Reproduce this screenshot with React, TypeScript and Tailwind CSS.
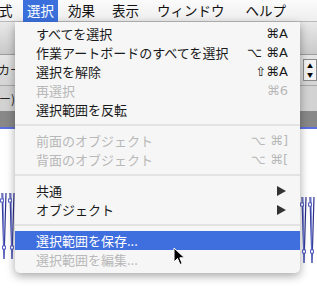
import React from 'react'

type Item =
  | { kind: 'sep' }
  | { kind: 'item'; label: string; shortcut?: string; disabled?: boolean; submenu?: boolean; active?: boolean }

const items: Item[] = [
  { kind: 'item', label: 'すべてを選択', shortcut: '⌘A' },
  { kind: 'item', label: '作業アートボードのすべてを選択', shortcut: '⌥ ⌘A' },
  { kind: 'item', label: '選択を解除', shortcut: '⇧⌘A' },
  { kind: 'item', label: '再選択', shortcut: '⌘6', disabled: true },
  { kind: 'item', label: '選択範囲を反転' },
  { kind: 'sep' },
  { kind: 'item', label: '前面のオブジェクト', shortcut: '⌥ ⌘]', disabled: true },
  { kind: 'item', label: '背面のオブジェクト', shortcut: '⌥ ⌘[', disabled: true },
  { kind: 'sep' },
  { kind: 'item', label: '共通', submenu: true },
  { kind: 'item', label: 'オブジェクト', submenu: true },
  { kind: 'sep' },
  { kind: 'item', label: '選択範囲を保存...', active: true },
  { kind: 'item', label: '選択範囲を編集...', disabled: true },
]

const jp = { fontFamily: '"Noto Sans CJK JP", "DejaVu Sans", sans-serif' }
const keys = { fontFamily: '"DejaVu Sans", "Noto Sans CJK JP", sans-serif' }

function Zigzag() {
  return (
    <svg width="17" height="72" viewBox="0 0 17 72" className="block">
      <g stroke="#2a2f8a" strokeWidth="1.2" fill="none">
        <path d="M2 2 L4 68 L6 2" />
        <path d="M10 2 L12 68 L14 2" />
      </g>
      <g stroke="#6b78d8" strokeWidth="1" fill="none">
        <path d="M3 2 L4 68" />
        <path d="M11 2 L12 68" />
      </g>
      <g fill="white" stroke="#5a64c8" strokeWidth="1">
        <rect x="0.5" y="8" width="3" height="3" />
        <rect x="8.5" y="8" width="3" height="3" />
        <rect x="2.5" y="55" width="3" height="3" />
        <rect x="10.5" y="55" width="3" height="3" />
      </g>
    </svg>
  )
}

export default function App() {
  return (
    <div className="relative w-[317px] h-[291px] overflow-hidden bg-white" style={jp}>
      {/* menu bar */}
      <div className="h-[22px] flex items-center bg-gradient-to-b from-[#fbfbfb] to-[#eeeeee] border-b border-[#b9b9b9] text-[13.5px] text-[#111]">
        <span className="-ml-[1px] w-[24px]">式</span>
        <span className="h-[22px] w-[35px] flex items-center justify-center bg-[#3a6fdc] text-white">選択</span>
        <span className="ml-[10px]">効果</span>
        <span className="ml-[17px]">表示</span>
        <span className="ml-[18px]">ウィンドウ</span>
        <span className="ml-[21px]">ヘルプ</span>
      </div>

      {/* panel behind the menu */}
      <div className="h-[33px] bg-gradient-to-b from-[#e9e9e9] to-[#c9c9c9] border-b border-[#9c9c9c]" />
      <div className="h-[31px] flex items-center justify-between bg-gradient-to-b from-[#e4e4e4] to-[#d4d4d4] border-b border-[#a8a8a8]">
        <span className="text-[12px] text-[#222] -ml-[2px]">カー</span>
        <div className="mr-0 w-[14px] h-[22px] border border-[#8a8a8a] bg-[#f2f2f2] flex flex-col items-center justify-center text-[6px] leading-[9px] text-black">
          <span>▲</span>
          <span>▼</span>
        </div>
      </div>
      <div className="h-[25px] flex items-center bg-[#d2d2d2]">
        <span className="text-[12px] text-[#222] -ml-[1px]">ー)</span>
      </div>
      <div className="h-[16px] bg-[#888888]" />
      <div className="h-[2px] bg-[#5b6fe2]" />
      <div className="flex justify-between mt-[62px]">
        <Zigzag />
        <div className="mt-[4px]">
          <Zigzag />
        </div>
      </div>

      {/* dropdown */}
      <div className="absolute left-[15px] top-[22px] w-[285px] pt-[2px] pb-[4px] bg-[#f6f6f6] rounded-b-[5px] shadow-[0_3px_10px_rgba(0,0,0,0.35)] text-[13px]">
        {items.map((it, i) =>
          it.kind === 'sep' ? (
            <div key={i} className="h-[12px] flex items-center">
              <div className="w-full h-[2px] bg-[#e3e3e3]" />
            </div>
          ) : (
            <div
              key={i}
              className={`h-[19px] flex items-center justify-between pl-[21px] pr-[12px] ${
                it.active ? 'bg-[#3f6ede] text-white' : it.disabled ? 'text-[#b8b8b8]' : 'text-[#1a1a1a]'
              }`}
            >
              <span>{it.label}</span>
              {it.shortcut && (
                <span className="text-[13px] whitespace-pre" style={keys}>
                  {it.shortcut}
                </span>
              )}
              {it.submenu && (
                <svg width="9" height="10" viewBox="0 0 9 10" className="mr-[2px]">
                  <path d="M0 0 L9 5 L0 10 Z" fill="#333" />
                </svg>
              )}
            </div>
          )
        )}
      </div>

      {/* cursor */}
      <svg className="absolute left-[173px] top-[247px]" width="13" height="19" viewBox="0 0 13 19">
        <path d="M1 1 L1 15 L4.5 11.5 L7 17.5 L9.2 16.5 L6.8 10.8 L11.5 10.8 Z" fill="black" stroke="white" strokeWidth="1" strokeLinejoin="round" />
      </svg>
    </div>
  )
}
